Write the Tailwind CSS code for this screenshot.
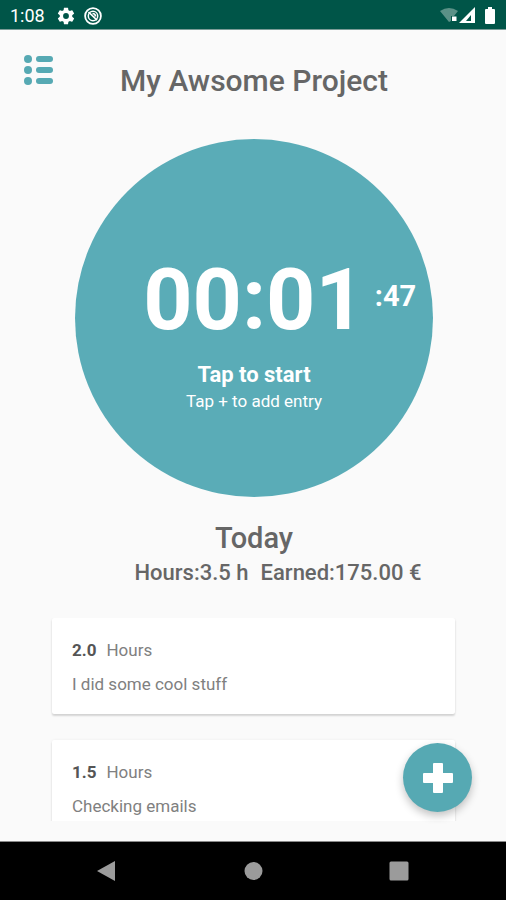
<!DOCTYPE html>
<html lang="en">
<head>
<meta charset="utf-8">
<meta name="viewport" content="width=device-width, initial-scale=1">
<title>My Awsome Project</title>
<script src="https://cdn.jsdelivr.net/npm/@tailwindcss/browser@4"></script>
</head>
<body class="flex h-screen flex-col bg-[#fafafa] font-['Roboto','Noto_Sans',sans-serif] text-[#666666]">
  <!-- Status bar -->
  <div class="flex h-[30px] shrink-0 items-center border-b border-[#7b9c97] bg-[#005548] px-[10px] pt-[2px] text-white">
    <span class="text-[18px] leading-5">1:08</span>
    <svg class="ml-[11px] size-5" viewBox="0 0 24 24" fill="currentColor" aria-hidden="true"><path d="M19.43 12.98c.04-.32.07-.64.07-.98s-.03-.66-.07-.98l2.11-1.65c.19-.15.24-.42.12-.64l-2-3.46c-.12-.22-.39-.3-.61-.22l-2.49 1c-.52-.4-1.08-.73-1.69-.98l-.38-2.65A.49.49 0 0 0 14 2h-4c-.25 0-.46.18-.49.42l-.38 2.65c-.61.25-1.17.59-1.69.98l-2.49-1c-.23-.09-.49 0-.61.22l-2 3.46c-.13.22-.07.49.12.64l2.11 1.65c-.04.32-.07.65-.07.98s.03.66.07.98l-2.11 1.65c-.19.15-.24.42-.12.64l2 3.46c.12.22.39.3.61.22l2.49-1c.52.4 1.08.73 1.69.98l.38 2.65c.03.24.24.42.49.42h4c.25 0 .46-.18.49-.42l.38-2.65c.61-.25 1.17-.59 1.69-.98l2.49 1c.23.09.49 0 .61-.22l2-3.46c.12-.22.07-.49-.12-.64l-2.11-1.65zM12 15.500a3.500 3.500 0 1 1 0-7 3.500 3.500 0 0 1 0 7z"/></svg>
    <svg class="ml-[8px] size-[18px]" viewBox="0 0 18 18" fill="none" stroke="currentColor" aria-hidden="true"><circle cx="9" cy="9" r="7.900" stroke-width="1.800"/><circle cx="9" cy="9" r="4.700" stroke-width="1.500"/><path d="M4.500 5 13 13.200M8.500 6.500Q11.500 6.500 11.500 9.500" stroke-width="1.700"/></svg>
    <div class="ml-auto flex items-center">
      <svg class="h-[18px] w-[18px]" viewBox="0 0 18 18" aria-hidden="true"><path d="M0 4Q9-2 18 4L14 9H11V14L9 15Z" fill="#5b9187"/><rect x="12" y="9.500" width="4.500" height="4.500" fill="#fff"/></svg>
      <svg class="h-[18px] w-[18px]" viewBox="0 0 18 18" aria-hidden="true"><path fill-rule="evenodd" d="M1 16 17 0V16ZM8 14H13V8Z" fill="#fff"/></svg>
      <svg class="ml-[8px] h-[18px] w-[12px]" viewBox="0 0 12 18" aria-hidden="true"><path d="M4 0H8V2H10Q11 2 11 3V16Q11 17 10 17H2Q1 17 1 16V3Q1 2 2 2H4Z" fill="#fff"/></svg>
    </div>
  </div>

  <main class="relative flex min-h-0 flex-1 flex-col pb-5">
    <header class="grid grid-cols-[1fr_auto_1fr] items-start pt-[25px] pr-[22px] pl-6">
      <button type="button" aria-label="Project list" class="justify-self-start text-[#56a9b3]">
        <svg class="h-[30px] w-[30px]" viewBox="0 0 30 30" fill="currentColor" aria-hidden="true"><circle cx="4" cy="4" r="4"/><circle cx="4" cy="15" r="4"/><circle cx="4" cy="26" r="4"/><rect x="12" y="1" width="17" height="6" rx="3"/><rect x="12" y="12" width="17" height="6" rx="3"/><rect x="12" y="23" width="17" height="6" rx="3"/></svg>
      </button>
      <h1 class="pt-[10px] text-[30px] leading-8 font-medium">My Awsome Project</h1>
    </header>

    <div class="flex justify-center pt-[42px] pl-[2px]">
      <button type="button" class="flex size-[358px] shrink-0 flex-col items-center rounded-full bg-[#5aacb7] pt-[116px] text-white">
        <span class="grid w-full grid-cols-[1fr_auto_1fr] items-center font-bold">
          <span class="col-start-2 text-[86px] leading-[90px]">00:01</span>
          <span class="pb-[8px] pl-[10px] text-left text-[29px] leading-8">:47</span>
        </span>
        <span class="mt-[16px] text-[22px] leading-7 font-bold">Tap to start</span>
        <span class="text-[17px] leading-6">Tap + to add entry</span>
      </button>
    </div>

    <section class="mt-[25px] pl-[2px] text-center font-medium">
      <h2 class="text-[29px] leading-8">Today</h2>
      <p class="flex justify-center gap-3 pt-[5px] pl-12 text-[22px] leading-7"><span>Hours:3.5 h</span><span>Earned:175.00 €</span></p>
    </section>

    <ul class="mr-[47px] ml-[48px] mt-[31px] flex min-h-0 flex-1 flex-col gap-[26px] overflow-hidden px-[4px] text-[17px] leading-6 text-[#808080]">
      <li class="shrink-0 rounded-[2px] bg-white px-5 pt-[20px] pb-[18px] shadow-[0_2px_2px_rgba(0,0,0,0.14),0_0_3px_rgba(0,0,0,0.06)]">
        <p><b class="mr-[10px] text-[#555555]">2.0</b>Hours</p>
        <p class="mt-[10px]">I did some cool stuff</p>
      </li>
      <li class="shrink-0 rounded-[2px] bg-white px-5 pt-[20px] pb-[18px] shadow-[0_2px_2px_rgba(0,0,0,0.14),0_0_3px_rgba(0,0,0,0.06)]">
        <p><b class="mr-[10px] text-[#555555]">1.5</b>Hours</p>
        <p class="mt-[10px]">Checking emails</p>
      </li>
    </ul>

    <button type="button" aria-label="Add entry" class="absolute right-[34px] bottom-[29px] flex size-[69px] items-center justify-center rounded-full bg-[#56a9b3] text-white shadow-[0_4px_8px_rgba(0,0,0,0.24)]">
      <svg class="size-[30px]" viewBox="0 0 30 30" fill="currentColor" aria-hidden="true"><path d="M11 0h8q1 0 1 1v9h9q1 0 1 1v8q0 1-1 1h-9v9q0 1-1 1h-8q-1 0-1-1v-9H1q-1 0-1-1v-8q0-1 1-1h9V1q0-1 1-1z"/></svg>
    </button>
  </main>

  <!-- System navigation -->
  <nav class="grid h-[59px] shrink-0 grid-cols-3 items-center border-t border-[#8a8a8a] bg-black px-[34px] text-[#9b9b9b]">
    <button type="button" aria-label="Back" class="justify-self-center"><svg class="size-[22px]" viewBox="0 0 22 22" fill="currentColor" aria-hidden="true"><path d="M1 11 19 1V21Z"/></svg></button>
    <button type="button" aria-label="Home" class="justify-self-center"><svg class="size-[22px]" viewBox="0 0 22 22" fill="currentColor" aria-hidden="true"><circle cx="11.500" cy="11" r="9"/></svg></button>
    <button type="button" aria-label="Recent apps" class="justify-self-center"><svg class="size-[22px]" viewBox="0 0 22 22" fill="currentColor" aria-hidden="true"><rect x="1.500" y="1.500" width="19" height="19" rx="1.500"/></svg></button>
  </nav>
</body>
</html>
